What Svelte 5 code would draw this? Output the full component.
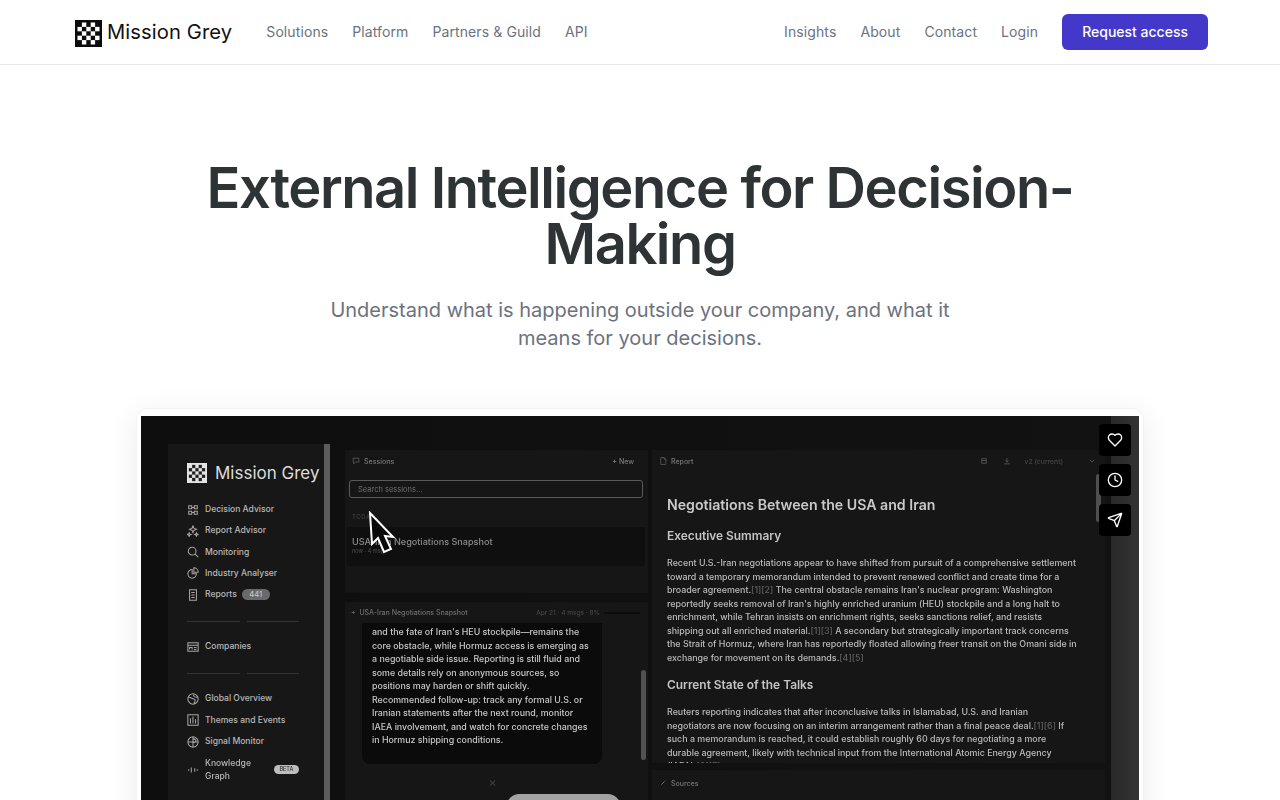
<script lang="ts">
  const leftLinks = ["Solutions", "Platform", "Partners & Guild", "API"];
  const rightLinks = ["Insights", "About", "Contact", "Login"];

  // checker pattern of the logo mark, cells in a 5x5 grid
  const checker = [
    [1, 0], [3, 0],
    [0, 1], [2, 1], [4, 1],
    [1, 2], [3, 2],
    [0, 3], [2, 3], [4, 3],
    [1, 4], [3, 4],
  ];

  const icons = {
    advisor: "M2 2h3.5v3.5H2zM8.5 2H12v3.5H8.5zM2 8.5h3.5V12H2zM8.5 8.5H12V12H8.5zM5.5 4h3M5.5 10h3",
    sparkle: "M7 1l1.2 3L11 5 8.2 6 7 9 5.8 6 3 5l2.8-1zM2.5 9l.7 1.6 1.6.6-1.6.6-.7 1.7-.7-1.7L.2 11.200l1.600-.6zM11 9l.6 1.400 1.400.6-1.400.6L11 13l-.6-1.400L9 11l1.400-.6z",
    search: "M6 1.500a4.500 4.500 0 1 0 0 9 4.500 4.500 0 0 0 0-9zM9.300 9.300L13 13",
    pie: "M6 3a5 5 0 1 0 5 5H6zM8 1a5 5 0 0 1 5 5H8z",
    doc: "M3 1h8v12H3zM5 4h4M5 7h4M5 10h4",
    companies: "M1 2h12v10H1zM1 5h12M3 10V7.500h3V10M8 7.500h3M8 10h3",
    globe: "M7 1a6 6 0 1 0 0 12A6 6 0 0 0 7 1zM2 5c3 0 4 2 6 2s2 3 0 5M8 1.500C7 4 9 5 12 5",
    themes: "M1 1h12v12H1zM4 11V5M7 11V3M10 11V6",
    signal: "M7 1a6 6 0 1 0 0 12A6 6 0 0 0 7 1zM1 7h12M7 1v12M7 4a2 2 0 1 1 0 3",
    graph: "M2 6v2M5 4v6M9 5v4M12 6v2",
  };

  const group1 = [
    { label: "Decision Advisor", icon: icons.advisor },
    { label: "Report Advisor", icon: icons.sparkle },
    { label: "Monitoring", icon: icons.search },
    { label: "Industry Analyser", icon: icons.pie },
    { label: "Reports", icon: icons.doc, count: "441" },
  ];
  const group2 = [
    { label: "Global Overview", icon: icons.globe },
    { label: "Themes and Events", icon: icons.themes },
    { label: "Signal Monitor", icon: icons.signal },
  ];

  const chatLines = [
    "and the fate of Iran's HEU stockpile—remains the",
    "core obstacle, while Hormuz access is emerging as",
    "a negotiable side issue. Reporting is still fluid and",
    "some details rely on anonymous sources, so",
    "positions may harden or shift quickly.",
    "Recommended follow-up: track any formal U.S. or",
    "Iranian statements after the next round, monitor",
    "IAEA involvement, and watch for concrete changes",
    "in Hormuz shipping conditions.",
  ];
</script>

<main>
  <header class="nav">
    <a class="brand" href="/">
      <svg class="mark" viewBox="0 0 27 27" aria-hidden="true">
        <rect width="27" height="27" fill="#0c0c0c" />
        {#each checker as [cx, cy]}
          <rect x={2.5 + cx * 4.4} y={2.5 + cy * 4.4} width="4.4" height="4.4" fill="#fff" />
        {/each}
      </svg>
      <span>Mission Grey</span>
    </a>
    <nav class="links">
      {#each leftLinks as l}<a href="/">{l}</a>{/each}
    </nav>
    <nav class="links right">
      {#each rightLinks as l}<a href="/">{l}</a>{/each}
      <a class="cta" href="/">Request access</a>
    </nav>
  </header>

  <section class="hero">
    <h1>External Intelligence for Decision-Making</h1>
    <p>Understand what is happening outside your company, and what it means for your decisions.</p>
  </section>

  <div class="card">
    <div class="video">
      <div class="shot">
        <aside class="sidebar">
          <div class="side-inner">
            <div class="side-brand">
              <svg viewBox="0 0 27 27" aria-hidden="true">
                <rect width="27" height="27" fill="#e4e4e4" />
                {#each checker as [cx, cy]}
                  <rect x={2.5 + cx * 4.4} y={2.5 + cy * 4.4} width="4.4" height="4.4" fill="#222" />
                {/each}
              </svg>
              <span>Mission Grey</span>
            </div>
            <ul class="menu">
              {#each group1 as it}
                <li>
                  <svg viewBox="0 0 14 14" aria-hidden="true"><path d={it.icon} /></svg>
                  {it.label}
                  {#if it.count}<em class="count">{it.count}</em>{/if}
                </li>
              {/each}
            </ul>
            <div class="divider"><i></i><i></i></div>
            <ul class="menu">
              <li>
                <svg viewBox="0 0 14 14" aria-hidden="true"><path d={icons.companies} /></svg>
                Companies
              </li>
            </ul>
            <div class="divider"><i></i><i></i></div>
            <ul class="menu third">
              {#each group2 as it}
                <li>
                  <svg viewBox="0 0 14 14" aria-hidden="true"><path d={it.icon} /></svg>
                  {it.label}
                </li>
              {/each}
              <li class="kg">
                <svg viewBox="0 0 14 14" aria-hidden="true"><path d={icons.graph} /></svg>
                <span>Knowledge<br />Graph</span>
                <em class="beta">BETA</em>
              </li>
            </ul>
          </div>
          <div class="side-scroll"></div>
        </aside>

        <div class="col">
          <section class="panel sessions">
            <div class="phead">
              <svg viewBox="0 0 14 14" aria-hidden="true"><path d="M2 2h10v7H6l-3 3V9H2z" /></svg>
              <span>Sessions</span>
              <b class="new">+ New</b>
            </div>
            <div class="search">Search sessions...</div>
            <div class="today">TODAY</div>
            <div class="row">
              <strong>USA-Iran Negotiations Snapshot</strong>
              <small>now · 4 msgs</small>
            </div>
          </section>
          <section class="panel chat">
            <div class="chat-head">
              <span class="chat-title">+ &nbsp;USA-Iran Negotiations Snapshot</span>
              <span class="chat-meta">Apr 21 · 4 msgs · 8%</span>
              <i class="meter"></i>
            </div>
            <div class="chat-body">
              <div class="bubble">
                {#each chatLines as line}<div>{line}</div>{/each}
              </div>
              <div class="chat-scroll"></div>
            </div>
            <div class="close">×</div>
            <div class="user-bubble"></div>
          </section>
        </div>

        <div class="col report-col">
          <section class="panel report">
            <div class="phead rhead">
              <svg viewBox="0 0 14 14" aria-hidden="true"><path d="M3 1h6l3 3v9H3zM9 1v3h3" /></svg>
              <span>Report</span>
              <svg class="tool" viewBox="0 0 14 14" aria-hidden="true"><path d="M3 3h8v8H3zM3 6h8" /></svg>
              <svg class="tool t2" viewBox="0 0 14 14" aria-hidden="true"><path d="M7 2v7M4 6l3 3 3-3M2 12h10" /></svg>
              <span class="version">v2 (current)</span>
              <svg class="chev" viewBox="0 0 14 14" aria-hidden="true"><path d="M3 5l4 4 4-4" /></svg>
            </div>
            <article>
              <h2>Negotiations Between the USA and Iran</h2>
              <h3>Executive Summary</h3>
              <p>
                Recent U.S.-Iran negotiations appear to have shifted from pursuit of a comprehensive settlement<br />
                toward a temporary memorandum intended to prevent renewed conflict and create time for a<br />
                broader agreement.<span class="ref">[1][2]</span> The central obstacle remains Iran's nuclear program: Washington<br />
                reportedly seeks removal of Iran's highly enriched uranium (HEU) stockpile and a long halt to<br />
                enrichment, while Tehran insists on enrichment rights, seeks sanctions relief, and resists<br />
                shipping out all enriched material.<span class="ref">[1][3]</span> A secondary but strategically important track concerns<br />
                the Strait of Hormuz, where Iran has reportedly floated allowing freer transit on the Omani side in<br />
                exchange for movement on its demands.<span class="ref">[4][5]</span>
              </p>
              <h3>Current State of the Talks</h3>
              <p>
                Reuters reporting indicates that after inconclusive talks in Islamabad, U.S. and Iranian<br />
                negotiators are now focusing on an interim arrangement rather than a final peace deal.<span class="ref">[1][6]</span> If<br />
                such a memorandum is reached, it could establish roughly 60 days for negotiating a more<br />
                durable agreement, likely with technical input from the International Atomic Energy Agency<br />
                (IAEA).<span class="ref">[6][7]</span>
              </p>
            </article>
            <div class="report-scroll"></div>
          </section>
          <section class="panel sources">
            <div class="phead">
              <svg viewBox="0 0 14 14" aria-hidden="true"><path d="M5 9l4-4M3 11l2-2 4-4 2-2" /></svg>
              <span>Sources</span>
            </div>
          </section>
        </div>
      </div>

      <svg class="cursor" viewBox="0 0 28 44" aria-hidden="true">
        <path d="M2 2L4 33L10 27L16 41L23 38L17 25L25 26Z" />
      </svg>

      <div class="actions">
        <button aria-label="Like">
          <svg viewBox="0 0 24 24"><path d="M19 14c1.490-1.460 3-3.210 3-5.500A5.500 5.500 0 0 0 16.500 3c-1.760 0-3 .5-4.500 2-1.500-1.500-2.740-2-4.500-2A5.500 5.500 0 0 0 2 8.500c0 2.300 1.500 4.050 3 5.500l7 7z" /></svg>
        </button>
        <button aria-label="Watch later">
          <svg viewBox="0 0 24 24"><circle cx="12" cy="12" r="10" /><path d="M12 6v6l4 2" /></svg>
        </button>
        <button aria-label="Share">
          <svg viewBox="0 0 24 24"><path d="M14.500 21.700a.5.5 0 0 0 .9 0l6.500-19a.5.5 0 0 0-.6-.6l-19 6.500a.5.5 0 0 0 0 .9l7.900 3.200a2 2 0 0 1 1.100 1.100zM21.900 2.100L10.900 13.100" /></svg>
        </button>
      </div>
    </div>
  </div>
</main>

<style>
  :global(body) {
    background: #fff;
  }
  main {
    height: 800px;
    overflow: hidden;
    font-family: Inter, "Liberation Sans", sans-serif;
  }
  a {
    text-decoration: none;
    color: inherit;
  }
  .nav {
    height: 64px;
    display: flex;
    align-items: center;
    padding: 0 72px 0 75px;
    border-bottom: 1px solid #e5e7eb;
  }
  .brand {
    display: flex;
    align-items: center;
    gap: 5px;
    color: #111;
    font-size: 20.200px;
    letter-spacing: 0.1px;
  }
  .brand span {
    margin-bottom: 1px;
  }
  .mark {
    width: 27px;
    height: 27px;
    margin-top: 2px;
  }
  .links {
    display: flex;
    align-items: center;
    gap: 24px;
    margin-left: 34px;
    font-size: 14px;
    letter-spacing: 0.100px;
    color: #6b7280;
  }
  .links a:not(.cta) {
    margin-bottom: 1px;
  }
  .links.right {
    margin-left: auto;
  }
  .cta {
    background: #4338ca;
    color: #fff;
    font-weight: 500;
    letter-spacing: 0;
    padding: 0 20px;
    height: 36px;
    line-height: 36px;
    border-radius: 6px;
  }
  .hero {
    text-align: center;
    padding-top: 95px;
  }
  .hero h1 {
    margin: 0 auto;
    max-width: 880px;
    font-size: 56px;
    line-height: 56px;
    font-weight: 600;
    letter-spacing: -1.430px;
    color: #2e3336;
  }
  .hero p {
    margin: 24px auto 0;
    max-width: 640px;
    font-size: 20px;
    line-height: 28px;
    color: #6b7280;
  }
  .card {
    margin: 56px 136px 0;
    padding: 7px 4px 0;
    border: 1px solid #f3f3f3;
    border-bottom: 0;
    border-radius: 12px 12px 0 0;
    box-shadow: 0 6px 30px rgba(0, 0, 0, 0.08);
  }
  .video {
    position: relative;
    height: 460px;
    overflow: hidden;
    background: linear-gradient(90deg, #0e0e0e 0, #121212 97.200%, #292929 97.200%, #333 100%);
  }
  .shot {
    display: grid;
    grid-template-columns: 173px 303px 453px;
    column-gap: 4px;
    padding: 28px 0 0 27px;
    height: 100%;
    box-sizing: border-box;
    filter: blur(0.6px);
    color: #bdbdbd;
  }
  .sidebar {
    display: flex;
    align-items: stretch;
    margin-right: 11px;
  }
  .side-inner {
    flex: 1;
    background: #171717;
    padding: 19px 0 0 19px;
  }
  .side-scroll {
    width: 6px;
    background: #5c5c5c;
  }
  .side-brand {
    display: flex;
    align-items: center;
    gap: 8px;
    font-size: 17px;
    line-height: 20px;
    color: #ddd;
    white-space: nowrap;
    margin-bottom: 20px;
  }
  .side-brand svg {
    width: 20px;
    height: 20px;
    flex: none;
  }
  .menu {
    list-style: none;
    margin: 0;
    padding: 0;
    display: flex;
    flex-direction: column;
    gap: 8.250px;
    font-size: 8.550px;
    font-weight: 500;
    line-height: 13px;
    color: #b8b8b8;
  }
  .menu.third {
    gap: 8.500px;
  }
  .menu li {
    display: flex;
    align-items: center;
    gap: 6px;
    white-space: nowrap;
  }
  .menu svg {
    width: 12px;
    height: 12px;
    flex: none;
    fill: none;
    stroke: #a6a6a6;
    stroke-width: 1.200;
  }
  .count,
  .beta {
    font-style: normal;
    border-radius: 6px;
    text-align: center;
  }
  .count {
    background: #6a6a6a;
    color: #c5c5c5;
    font-size: 7.500px;
    line-height: 11px;
    padding: 0 7.500px;
    margin-left: -1px;
  }
  .beta {
    background: #bdbdbd;
    color: #333;
    font-size: 5.500px;
    line-height: 9px;
    padding: 0 5.500px;
    margin-left: 17px;
  }
  .kg {
    line-height: 13px;
  }
  .divider {
    display: flex;
    gap: 7px;
    width: 112px;
    margin: 19.500px 0 18.500px;
  }
  .divider i {
    flex: 1;
    height: 1px;
    background: #333;
  }
  .col {
    display: flex;
    flex-direction: column;
    gap: 9px;
    padding-top: 6px;
    min-width: 0;
  }
  .report-col {
    gap: 7px;
  }
  .panel {
    background: #161616;
    flex: none;
    position: relative;
  }
  .phead {
    display: flex;
    align-items: center;
    gap: 4px;
    height: 22px;
    padding-left: 7px;
    font-size: 7px;
    font-weight: 500;
    color: #777;
  }
  .phead svg {
    width: 8px;
    height: 8px;
    fill: none;
    stroke: #666;
    stroke-width: 1.200;
  }
  .sessions {
    height: 143px;
  }
  .new {
    margin-left: auto;
    margin-right: 14px;
    font-weight: 500;
    color: #7c7c7c;
  }
  .search {
    margin: 8px 5px 0 4px;
    height: 16px;
    line-height: 17px;
    border: 1px solid #5a5a5a;
    border-radius: 3px;
    padding-left: 8px;
    font-size: 7.500px;
    color: #707070;
  }
  .today {
    margin: 15px 0 0 7px;
    font-size: 6px;
    letter-spacing: 0.500px;
    color: #444;
  }
  .row {
    margin: 7px 3px 0 2px;
    height: 39px;
    background: #0f0f0f;
    padding: 9px 0 0 5px;
    box-sizing: border-box;
  }
  .row strong {
    display: block;
    font-size: 9.100px;
    line-height: 11px;
    font-weight: 500;
    color: #8c8c8c;
  }
  .row small {
    display: block;
    font-size: 5.500px;
    line-height: 9px;
    color: #505050;
  }
  .chat {
    height: 210px;
    overflow: hidden;
  }
  .chat-head {
    display: flex;
    align-items: center;
    height: 21px;
    padding-left: 6px;
    font-size: 7px;
    font-weight: 500;
    color: #6e6e6e;
  }
  .chat-title {
    white-space: nowrap;
  }
  .chat-meta {
    margin-left: auto;
    font-size: 6.500px;
    color: #444;
  }
  .meter {
    width: 36px;
    height: 2px;
    background: #0c0c0c;
    margin: 0 8px 0 4px;
  }
  .chat-body {
    display: flex;
    align-items: flex-start;
  }
  .bubble {
    width: 240px;
    height: 141px;
    margin-left: 17px;
    padding: 2px 0 0 10px;
    box-sizing: border-box;
    background: #0b0b0b;
    border-radius: 0 0 8px 8px;
    font-size: 8.850px;
    line-height: 13.500px;
    font-weight: 500;
    color: #c8c8c8;
    white-space: nowrap;
  }
  .chat-scroll {
    width: 5px;
    height: 90px;
    margin: 47px 0 0 39px;
    background: #515151;
    border-radius: 3px;
  }
  .close {
    text-align: center;
    margin: 11px 8px 0 0;
    font-size: 13px;
    line-height: 15px;
    color: #3f3f3f;
  }
  .user-bubble {
    width: 113px;
    height: 20px;
    margin: 4px 0 0 162px;
    background: #a3a3a3;
    border-radius: 12px 12px 0 0;
  }
  .report {
    height: 313px;
    overflow: hidden;
  }
  .tool {
    margin-left: auto;
  }
  .tool.t2 {
    margin-left: 11px;
  }
  .version {
    margin-left: 10px;
    font-size: 6.800px;
    color: #444;
  }
  .chev {
    margin: 0 9px 0 21px;
  }
  article {
    padding: 23px 0 0 15px;
    white-space: nowrap;
  }
  article h2 {
    margin: 0;
    font-size: 14.150px;
    line-height: 20px;
    font-weight: 600;
    color: #c9c9c9;
  }
  article h3 {
    margin: 12px 0 0;
    font-size: 11.900px;
    line-height: 18px;
    font-weight: 600;
    color: #c4c4c4;
  }
  article p {
    margin: 11px 0 0;
    font-size: 8.900px;
    line-height: 13.500px;
    font-weight: 500;
    color: #bcbcbc;
  }
  article p + h3 {
    margin-top: 12px;
  }
  .ref {
    color: #5e5e5e;
  }
  .report-scroll {
    position: absolute;
    right: 4px;
    top: 24px;
    width: 5px;
    height: 48px;
    background: #4f4f4f;
    border-radius: 3px;
  }
  .sources {
    height: 40px;
  }
  .sources .phead {
    padding-top: 2px;
  }
  .cursor {
    position: absolute;
    left: 227px;
    top: 95px;
    width: 28px;
    height: 44px;
    fill: #0a0a0a;
    stroke: #fff;
    stroke-width: 2;
    filter: blur(0.4px);
  }
  .actions {
    position: absolute;
    top: 8px;
    right: 8px;
    display: flex;
    flex-direction: column;
    gap: 8px;
  }
  .actions button {
    width: 32px;
    height: 32px;
    padding: 0;
    border: 0;
    border-radius: 4px;
    background: #000;
    display: flex;
    align-items: center;
    justify-content: center;
  }
  .actions svg {
    width: 16px;
    height: 16px;
    fill: none;
    stroke: #fff;
    stroke-width: 2;
    stroke-linecap: round;
    stroke-linejoin: round;
  }
</style>
